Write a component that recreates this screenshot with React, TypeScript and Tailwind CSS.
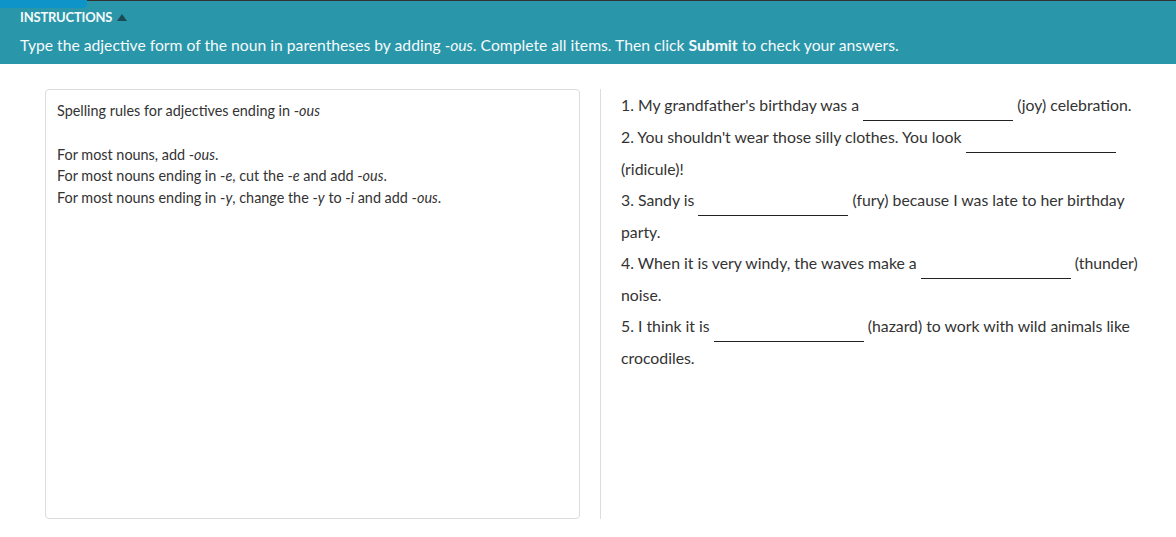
const font = { fontFamily: 'Lato, "Open Sans", sans-serif' };

function Blank() {
  return (
    <span className="inline-block w-[150px] h-[20px] border-b border-[#222] align-[-10px]" />
  );
}

const ITEMS: [string, string][] = [
  ['1. My grandfather\'s birthday was a', '(joy) celebration.'],
  ['2. You shouldn\'t wear those silly clothes. You look', '(ridicule)!'],
  ['3. Sandy is', '(fury) because I was late to her birthday party.'],
  ['4. When it is very windy, the waves make a', '(thunder) noise.'],
  ['5. I think it is', '(hazard) to work with wild animals like crocodiles.'],
];

export default function App() {
  return (
    <div className="w-[1176px] h-[537px] bg-white text-[#333]" style={font}>
      {/* Instructions banner */}
      <div className="relative h-[64px] bg-[#2a96aa] border-t border-[#333] px-[20px] pt-[7px] text-[#f5fafb]">
        <div className="absolute left-0 top-[-1px] w-[87px] h-[8px] bg-[#0f94c9] rounded-br-[4px]" />
        <div className="flex items-center gap-[5px] text-[13px] font-bold leading-[18px] tracking-[-0.2px]">
          INSTRUCTIONS
          <svg width="10" height="7" viewBox="0 0 10 7" className="mt-[1px]">
            <polygon points="5,0 10,7 0,7" fill="#1b4a55" />
          </svg>
        </div>
        <p className="mt-[7px] text-[15.7px] leading-[24px]">
          Type the adjective form of the noun in parentheses by adding <i>-ous</i>. Complete all items. Then click{' '}
          <b>Submit</b> to check your answers.
        </p>
      </div>

      <div className="flex pl-[45px] pt-[25px]">
        {/* Spelling rules panel */}
        <div className="w-[535px] h-[430px] border border-[#ddd] rounded-[4px] px-[11px] py-[10px] text-[14.4px] leading-[21.5px]">
          <p>
            Spelling rules for adjectives ending in -<i>ous</i>
          </p>
          <p className="mt-[22px]">
            For most nouns, add -<i>ous</i>.
          </p>
          <p>
            For most nouns ending in -<i>e</i>, cut the -<i>e</i> and add -<i>ous</i>.
          </p>
          <p>
            For most nouns ending in -<i>y</i>, change the -<i>y</i> to -<i>i</i> and add -<i>ous</i>.
          </p>
        </div>

        {/* Items */}
        <div className="ml-[20px] flex-1 h-[430px] border-l border-[#ddd] pl-[20px] pr-[20px] text-[15.8px] leading-[31px]">
          {ITEMS.map(([before, after]) => (
            <p key={before}>
              {before} <Blank /> {after}
            </p>
          ))}
        </div>
      </div>
    </div>
  );
}
